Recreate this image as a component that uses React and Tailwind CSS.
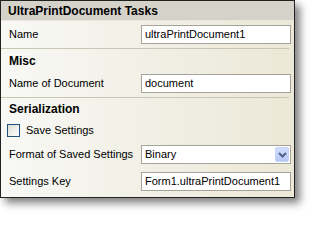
import React from "react";

function TextBox({ value }) {
  return (
    <div className="w-[150px] h-[19px] border border-[#a5a39a] bg-white flex items-center pl-[3px] text-[11px] text-black">
      {value}
    </div>
  );
}

function Combo({ value }) {
  return (
    <div className="w-[150px] h-[19px] border border-[#a5a39a] bg-white flex items-center pl-[3px] pr-[1px] text-[11px] text-black">
      <span className="flex-1">{value}</span>
      <div className="w-[14px] h-[15px] rounded-[2px] bg-gradient-to-b from-[#d3defc] to-[#b6c9f7] border border-[#c3d1f5] flex items-center justify-center">
        <svg width="9" height="6" viewBox="0 0 9 6">
          <path d="M1 1 L4.5 4.5 L8 1" fill="none" stroke="#4d6185" strokeWidth="2" />
        </svg>
      </div>
    </div>
  );
}

function Sep() {
  return <div className="h-px bg-[#c9c6b6] mr-[5px]" />;
}

export default function App() {
  return (
    <div className="w-[315px] h-[218px] bg-white" style={{ fontFamily: '"Liberation Sans", Arial, sans-serif' }}>
      <div className="w-[295px] h-[198px] border border-[#222] shadow-[5px_5px_8px_rgba(0,0,0,0.5)] flex flex-col bg-gradient-to-r from-[#f8f8f5] to-[#ebe8d7]">
        <div className="h-[20px] bg-[#d5d2ca] border-b border-[#e8e6df] flex items-center pl-[7px] text-[12px] font-bold text-black">
          UltraPrintDocument Tasks
        </div>
        <div className="h-[27px] flex items-center pl-[8px] pr-[3px] text-[11px] text-black">
          <span className="w-[132px]">Name</span>
          <TextBox value="ultraPrintDocument1" />
        </div>
        <Sep />
        <div className="h-[23px] flex items-center pl-[8px] text-[12px] font-bold text-black">Misc</div>
        <div className="h-[25px] flex items-start pt-[2px] pl-[8px] pr-[3px] text-[11px] text-black">
          <span className="w-[132px] leading-[19px]">Name of Document</span>
          <TextBox value="document" />
        </div>
        <Sep />
        <div className="h-[21px] flex items-center pl-[8px] text-[12px] font-bold text-black">Serialization</div>
        <div className="h-[22px] flex items-center pl-[6px] text-[11px] text-black">
          <div className="w-[13px] h-[13px] border border-[#1c5180] bg-gradient-to-br from-[#dcdcd5] to-white" />
          <span className="ml-[6px]">Save Settings</span>
        </div>
        <div className="h-[27px] flex items-center pl-[8px] pr-[3px] text-[11px] text-black">
          <span className="w-[132px]">Format of Saved Settings</span>
          <Combo value="Binary" />
        </div>
        <div className="h-[26px] flex items-start pt-[4px] pl-[8px] pr-[3px] text-[11px] text-black">
          <span className="w-[132px] leading-[19px]">Settings Key</span>
          <TextBox value="Form1.ultraPrintDocument1" />
        </div>
      </div>
    </div>
  );
}
